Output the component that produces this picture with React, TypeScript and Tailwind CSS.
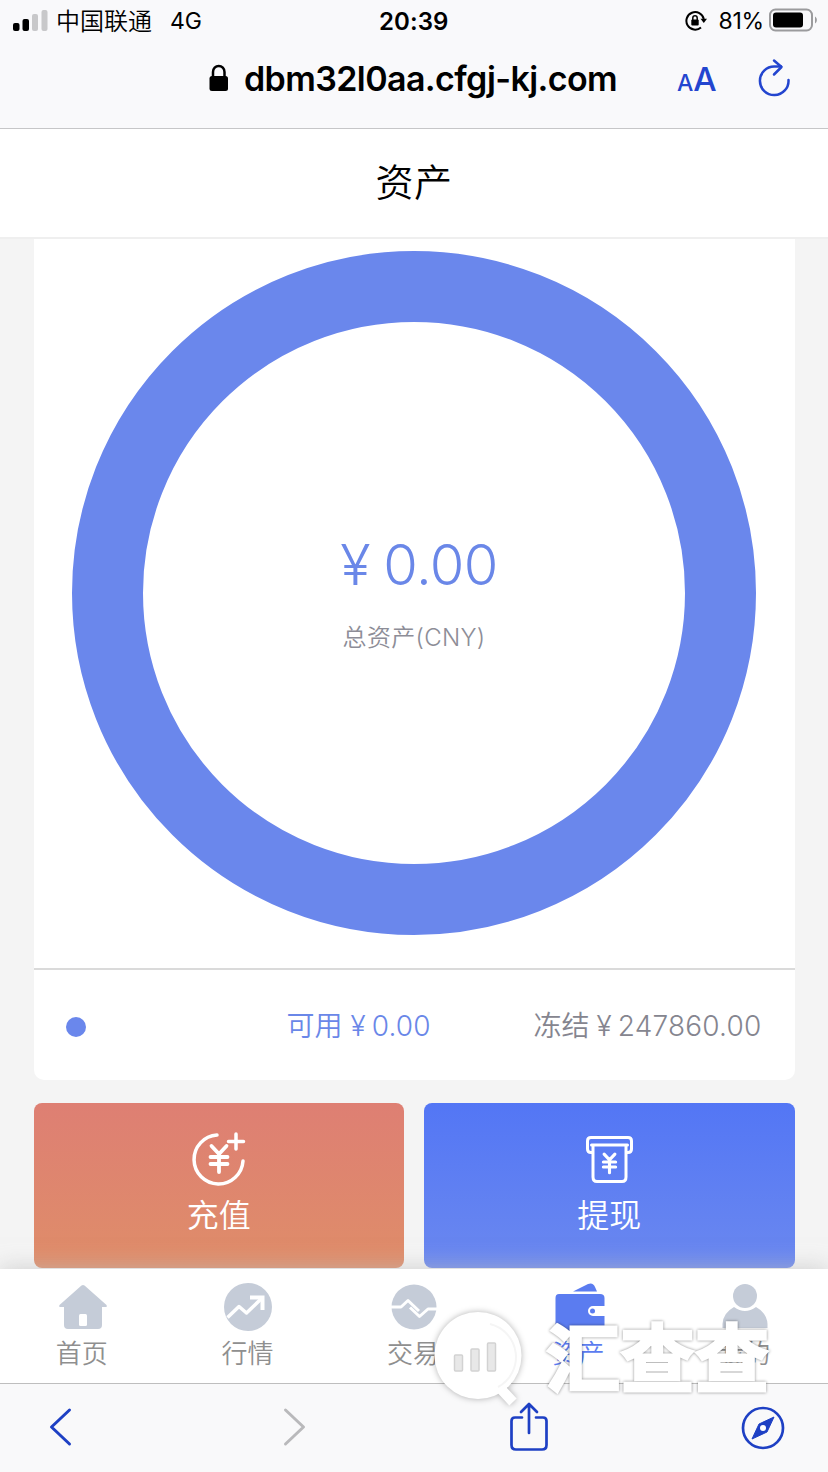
import type { ReactNode } from "react";

const YuanMark = () => (
  <path d="M-7.500 -11L0 -3L7.500 -11M0 -3V15M-8.500 0H8.500M-8.500 7H8.500" />
);

const StatusBar = () => {
  return (
    <div className="relative flex h-10 items-center justify-between pl-[13px] pr-[10px] text-black">
      <div className="flex items-center">
        <svg width="35" height="22" viewBox="0 0 35 22">
          <rect x="0" y="14" width="6.500" height="8" rx="2" fill="#000" />
          <rect x="9.500" y="10" width="6.500" height="12" rx="2" fill="#000" />
          <rect x="19" y="5" width="6" height="17" rx="2" fill="#c8c8ca" />
          <rect x="28.500" y="1" width="6" height="21" rx="2" fill="#c8c8ca" />
        </svg>
        <span className="ml-2 mt-[4px] text-[24px] font-[350]">中国联通</span>
        <span className="ml-[18px] mt-[3px] text-[23px]">4G</span>
      </div>
      <span className="absolute left-[379px] top-[5px] text-[24px] font-semibold leading-[34px] tracking-[0.1px]">20:39</span>
      <div className="flex items-center">
        <svg className="mt-[2px]" width="22" height="22" viewBox="0 0 22 22" fill="none" stroke="#000" strokeWidth="2">
          <path d="M16 17.500A8.800 8.800 0 1 1 18.800 9" />
          <path d="M15.500 8.800H22L18.800 13Z" fill="#000" stroke="none" />
          <rect x="6.300" y="9.500" width="7.400" height="6" rx="1" fill="#000" stroke="none" />
          <path d="M7.800 10V8A2.200 2.200 0 0 1 12.200 8V10" strokeWidth="1.500" />
        </svg>
        <span className="ml-[11px] mt-[3px] text-[23px] tracking-[-0.2px]">81%</span>
        <svg className="ml-[5px]" width="49" height="24" viewBox="0 0 49 24">
          <rect x="1" y="1.500" width="42" height="21" rx="5.500" fill="none" stroke="#9b9b9d" strokeWidth="2" />
          <rect x="4" y="4.500" width="30" height="15" rx="3" fill="#000" />
          <path d="M46 8.500C48.500 10 48.500 14 46 15.500Z" fill="#9b9b9d" />
        </svg>
      </div>
    </div>
  );
};

const AddressBar = () => {
  return (
    <div className="flex h-[88px] items-start pl-[209px]">
      <svg className="mt-[24px]" width="20" height="28" viewBox="0 0 20 28">
        <rect x="0.500" y="12" width="18.500" height="15" rx="2.500" fill="#000" />
        <path d="M4 13V8A5.700 6 0 0 1 15.500 8V13" fill="none" stroke="#000" strokeWidth="2.500" />
      </svg>
      <span className="ml-[15px] mt-[17px] w-[374px] whitespace-nowrap text-[34px] font-semibold leading-[44px] tracking-[-0.6px] text-black">
        dbm32l0aa.cfgj-kj.com
      </span>
      <div className="ml-[59px] mt-[17px] flex w-[40px] items-baseline font-medium leading-[44px] text-[#2345cf]">
        <span className="text-[23px]">A</span>
        <span className="text-[33px]">A</span>
      </div>
      <svg className="ml-[41px] mt-[18px]" width="34" height="40" viewBox="0 0 34 40" fill="none" stroke="#2345cf" strokeWidth="2.500" strokeLinecap="round" strokeLinejoin="round">
        <path d="M30.500 22A14.300 14.300 0 1 1 16.500 8.500H23" />
        <path d="M16 2.500L23.500 9L16 16.500" />
      </svg>
    </div>
  );
};

const AssetRing = () => {
  return (
    <div className="relative h-[729px]">
      <svg width="761" height="729" viewBox="0 0 761 729">
        <circle cx="380" cy="354" r="306.500" fill="none" stroke="#6a87ec" strokeWidth="71" />
      </svg>
      <div className="absolute inset-x-0 top-[291px] flex flex-col items-center">
        <div className="ml-[10px] flex items-baseline text-[56px] font-[350] leading-[70px] text-[#6a87e8]">
          <span className="w-[43px] text-[56px]">¥</span>
          <span className="tracking-[-0.6px]">0.00</span>
        </div>
        <span className="mt-[21px] text-[24px] font-[350] leading-[34px] tracking-[0.3px] text-[#8d8d97]">总资产(CNY)</span>
      </div>
    </div>
  );
};

const DepositIcon = () => (
  <svg width="56" height="56" viewBox="0 0 56 56" fill="none" stroke="#fff" strokeWidth="3.500" strokeLinecap="round">
    <path d="M26 4A24.500 24.500 0 1 0 52 30" />
    <path d="M45 3V18M37.500 10.500H52.500" />
    <g transform="translate(28 26)" strokeWidth="3.800">
      <YuanMark />
    </g>
  </svg>
);

const WithdrawIcon = () => (
  <svg width="56" height="56" viewBox="0 0 56 56" fill="none" stroke="#fff" strokeWidth="3" strokeLinecap="round" strokeLinejoin="round">
    <path d="M11 21.500H10Q6.500 21.500 6.500 18V10Q6.500 6.500 10 6.500H47Q50.500 6.500 50.500 10V18Q50.500 21.500 47 21.500H46" />
    <path d="M10.500 14H46.500M12 14V46Q12 50.500 16 50.500H41Q45 50.500 45 46V14" />
    <g transform="translate(28.500 31) scale(.72)" strokeWidth="4.300">
      <YuanMark />
    </g>
  </svg>
);

const TabItem = ({ label, active, children }: { label: string; active?: boolean; children: ReactNode }) => (
  <div className="flex flex-1 flex-col items-center pt-[13px]">
    <svg width="52" height="50" viewBox="0 0 52 50" fill={active ? "#5b7cf0" : "#c5ccd8"}>
      {children}
    </svg>
    <span className={active ? "mr-[2px] mt-[4px] text-[26px] font-[350] leading-[36px] text-[#5b7cf0]" : "mr-[2px] mt-[4px] text-[26px] font-[350] leading-[36px] text-[#8f8f8f]"}>
      {label}
    </span>
  </div>
);

const TabBar = () => {
  return (
    <nav className="relative flex h-[114px] bg-white shadow-[0_-2px_20px_rgba(190,190,190,0.6)]">
      <TabItem label="首页">
        <path d="M24.500 3.500Q26 2.500 27.500 3.500L49.500 23Q50.500 25 48.500 25H45V43Q45 47 41 47H11Q7 47 7 43V25H3.500Q1.500 25 2.500 23Z" />
        <rect x="22" y="32" width="8" height="12" rx="1.500" fill="#fff" />
      </TabItem>
      <TabItem label="行情">
        <circle cx="26" cy="25" r="24" />
        <path d="M5.500 35.500L17 24.500L24.500 31L39 17" fill="none" stroke="#fff" strokeWidth="3.500" strokeLinejoin="round" />
        <path d="M28 15.500H40.500V28" fill="none" stroke="#fff" strokeWidth="4" />
      </TabItem>
      <TabItem label="交易">
        <circle cx="26" cy="25" r="22.500" />
        <path d="M2 25H13L20 18.500L31 29M22 25.500L31.500 34.500L40 27H50" fill="none" stroke="#fff" strokeWidth="3" strokeLinejoin="round" />
      </TabItem>
      <TabItem label="资产" active>
        <path d="M19 9.500L34 2Q39 0 41 5L43 9.500Z" />
        <path d="M5 12H46Q50.500 12 50.500 16V24H39A5 5 0 0 0 39 34H50.500V49H1.500V16Q1.500 12 5 12Z" />
        <circle cx="38.500" cy="29" r="2.500" />
      </TabItem>
      <TabItem label="我的">
        <circle cx="26" cy="14" r="12" />
        <path d="M15 25Q26 33 37 25Q48 31 48.500 42V46H3.500V42Q4 31 15 25Z" />
      </TabItem>
    </nav>
  );
};

const BrowserToolbar = () => {
  return (
    <div className="relative flex h-[89px] border-t border-[#bebebe] bg-[#f9f9fa] pl-[47px] pr-[42px]">
      <svg className="mt-[22px]" width="28" height="42" viewBox="0 0 28 42" fill="none" stroke="#1e40c4" strokeWidth="3" strokeLinecap="round" strokeLinejoin="round">
        <path d="M22.500 4L4.500 21L22.500 38" />
      </svg>
      <svg className="ml-[206px] mt-[22px]" width="28" height="42" viewBox="0 0 28 42" fill="none" stroke="#b9b9bb" strokeWidth="3" strokeLinecap="round" strokeLinejoin="round">
        <path d="M4.500 4L22.500 21L4.500 38" />
      </svg>
      <svg className="ml-[199px] mt-[16px]" width="42" height="52" viewBox="0 0 42 52" fill="none" stroke="#1e40c4" strokeWidth="2.700" strokeLinecap="round" strokeLinejoin="round">
        <path d="M14 17.500H7Q3.500 17.500 3.500 21V45Q3.500 49.500 8 49.500H34Q38.500 49.500 38.500 45V21Q38.500 17.500 35 17.500H28" />
        <path d="M21 33V4M13 12L21 4L29 12" />
      </svg>
      <svg className="ml-auto mt-[21px]" width="46" height="46" viewBox="0 0 46 46">
        <circle cx="23" cy="23" r="20" fill="none" stroke="#1e40c4" strokeWidth="2.700" />
        <path d="M34 12L27 27L12 34L19 19Z" fill="#1e40c4" stroke="#1e40c4" strokeLinejoin="round" />
        <circle cx="23" cy="23" r="3" fill="#fff" />
      </svg>
    </div>
  );
};

const Watermark = () => {
  return (
    <div className="pointer-events-none absolute left-[430px] top-[1304px] flex">
      <svg className="drop-shadow-[0_0_3px_rgba(0,0,0,0.3)]" width="100" height="106" viewBox="0 0 100 106">
        <circle cx="48" cy="51.500" r="43.500" fill="#fff" />
        <path d="M70 84L83 98" stroke="#fff" strokeWidth="10" />
        <path d="M60 20A34 34 0 0 1 68 83" fill="none" stroke="#f5f5f5" strokeWidth="2" />
        <g fill="#e8e8e8" stroke="#d2d2d2" strokeWidth="1.500">
          <rect x="24.500" y="51" width="8" height="16" rx="1" />
          <rect x="41" y="45" width="8" height="22" rx="1" />
          <rect x="57.500" y="39" width="8" height="28" rx="1" />
        </g>
      </svg>
      <span className="ml-[16px] mt-[7px] whitespace-nowrap text-[74px] font-bold leading-[96px] tracking-[0.5px] text-white drop-shadow-[0_0_1.5px_rgba(0,0,0,0.45)] [-webkit-text-stroke:3px_white]">
        汇查查
      </span>
    </div>
  );
};

const App = () => {
  return (
    <div className="relative flex h-[1472px] w-[828px] flex-col overflow-hidden bg-[#f4f4f4] font-['Inter','Noto_Sans_CJK_SC',sans-serif]">
      <header className="h-[129px] shrink-0 border-b border-[#c6c6c8] bg-[#f9f9fb]">
        <StatusBar />
        <AddressBar />
      </header>
      <div className="flex h-[110px] shrink-0 items-center justify-center border-b-2 border-[#efefef] bg-white pb-[2px] text-[38px] font-[350] tracking-[0.5px] text-black">
        资产
      </div>

      <main className="h-[1030px] shrink-0 px-[33.5px]">
        <section className="h-[841px] rounded-b-[10px] bg-white">
          <AssetRing />
          <div className="flex h-[112px] items-center border-t-2 border-[#dadada] pl-[32px] pr-[33px] text-[28px]">
            <span className="mt-[4px] size-5 rounded-full bg-[#6a87ec]" />
            <div className="ml-[201px] mt-[2px] flex items-baseline whitespace-nowrap font-[350] text-[#6a87e8]">
              可用<span className="ml-[8px]">¥</span>
              <span className="ml-[6px] tracking-[0.2px]">0.00</span>
            </div>
            <div className="ml-auto mt-[2px] flex items-baseline whitespace-nowrap font-[350] text-[#85858f]">
              冻结<span className="ml-[7px]">¥</span>
              <span className="ml-[6px] tracking-[0.2px]">247860.00</span>
            </div>
          </div>
        </section>
        <div className="mt-[23px] grid grid-cols-2 gap-5 text-[32px] font-[350] leading-[44px] text-white">
          <button className="flex h-[165px] flex-col items-center rounded-lg bg-linear-to-b from-[#de7f73] to-[#df8d69] pt-[28px]">
            <DepositIcon />
            <span className="mt-[7px]">充值</span>
          </button>
          <button className="flex h-[165px] flex-col items-center rounded-lg bg-linear-to-b from-[#5376f5] to-[#6b88ef] pt-[28px]">
            <WithdrawIcon />
            <span className="mt-[7px]">提现</span>
          </button>
        </div>
      </main>

      <TabBar />
      <BrowserToolbar />
      <Watermark />
    </div>
  );
};

export default App;
